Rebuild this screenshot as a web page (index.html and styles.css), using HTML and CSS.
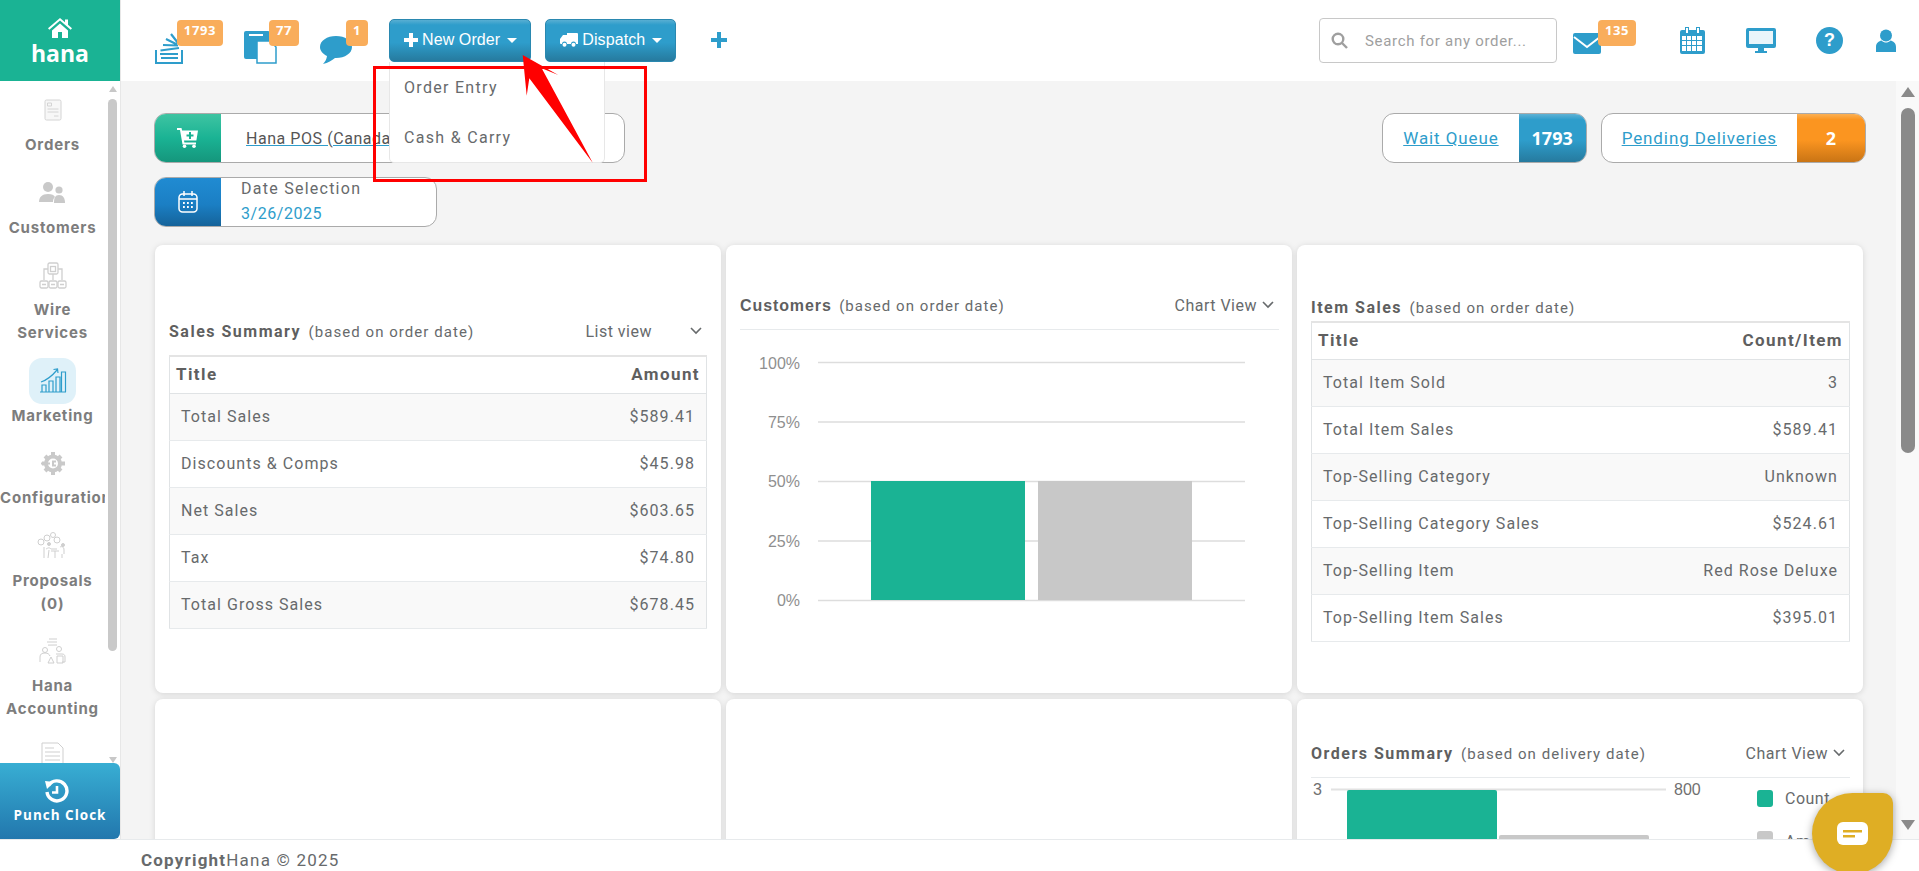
FILE: index.html
```html
<!DOCTYPE html>
<html lang="en">
<head>
	<meta charset="UTF-8">
	<meta name="viewport" content="width=device-width, initial-scale=1.0">
	<title>Hana POS</title>
	<link rel="stylesheet" href="styles.css">
</head>
<body>
<div class="app">
	<div class="shell">
		<!-- left menu -->
		<aside class="sidebar">
			<div class="logo">
				<svg class="logo-home" viewBox="0 0 24 20" width="24" height="20"><path fill="#fff" d="M12 0 0 10.2l1.3 1.5L12 2.6l10.7 9.1 1.3-1.5-4-3.4V1.5h-3v2.7zM4 12.6V20h6v-6h4v6h6v-7.4L12 5.6z"/></svg>
				<span class="logo-text">hana</span>
			</div>
			<div class="nav-wrap">
				<nav class="nav">
					<a class="nav-item">
						<span class="nav-icon"><svg width="18" height="22" viewBox="0 0 18 22" fill="none" stroke="#d4d4d4"><rect x="1" y="1" width="16" height="20" rx="1.5" fill="#f7f7f7"/><path d="M3.5 4h4v3h-4zM3.5 10h11M3.5 13h11M10 17h4.500"/></svg></span>
						<span class="nav-label">Orders</span>
					</a>
					<a class="nav-item">
						<span class="nav-icon"><svg width="27" height="21" viewBox="0 0 27 21" fill="#c9c9c9"><circle cx="9" cy="5" r="5"/><path d="M0 20c0-5 3-8 9-8 4 0 6 1 7 3-1.500 1-2 3-2 5z"/><circle cx="20" cy="8" r="3.600"/><path d="M15 21c0-5 1-8 5-8s6 3 6 8z"/></svg></span>
						<span class="nav-label">Customers</span>
					</a>
					<a class="nav-item">
						<span class="nav-icon"><svg width="28" height="27" viewBox="0 0 28 27" fill="none" stroke="#cfcfcf" stroke-width="1.300"><rect x="9" y="1" width="10" height="11" rx="1.500"/><rect x="11.500" y="4.500" width="5" height="5"/><path d="M9 7H5v11M19 7h4v11M14 12v6"/><rect x="1" y="19" width="8" height="7" rx="1.500"/><rect x="10" y="19" width="8" height="7" rx="1.500"/><rect x="19" y="19" width="8" height="7" rx="1.500"/><path d="M3 22.500h4M12 22.500h4M21 22.500h4"/></svg></span>
						<span class="nav-label">Wire<br>Services</span>
					</a>
					<a class="nav-item">
						<span class="nav-icon nav-icon-active"><svg width="28" height="25" viewBox="0 0 28 25" fill="none" stroke="#2e9dcb" stroke-width="1.200"><path d="M1 24h26M3 24v-7h4v7M10 24V13h4v11M17 24V9h4v15M22.500 24V4h4v20" /><path d="M2 14C8 12 13 8 18 2M14.500 1.500 18.500 1l.5 4" /></svg></span>
						<span class="nav-label">Marketing</span>
					</a>
					<a class="nav-item">
						<span class="nav-icon"><svg width="26" height="25" viewBox="0 0 26 25" fill="none" stroke="#c9c9c9"><circle cx="13" cy="12.500" r="7" stroke-width="4"/><path stroke-width="4" d="M13 1v3M13 21v3M2 12.500h3M21 12.500h4M5 5l2 2M19 18l2 2M21 5l-2 2M7 18l-2 2"/><path stroke-width="2" d="M1 12.500h9M16 10.500h-3v4h3"/></svg></span>
						<span class="nav-label nav-label-wide">Configuration</span>
					</a>
					<a class="nav-item">
						<span class="nav-icon"><svg width="32" height="27" viewBox="0 0 32 27" fill="none" stroke="#cfcfcf"><circle cx="4" cy="10" r="3"/><circle cx="10" cy="6" r="3"/><circle cx="16" cy="3" r="2.500"/><circle cx="20" cy="8" r="3"/><circle cx="12" cy="12" r="1.500" fill="#cfcfcf"/><circle cx="26" cy="13" r="1.500" fill="#cfcfcf"/><path d="M9 17c2-1 3-2 5 0h6M7 15v11M12 18l-1 8M23 15c2-1 4 0 4 3v4M25 22v4M14 19h8M18 19v7"/></svg></span>
						<span class="nav-label">Proposals<br>(0)</span>
					</a>
					<a class="nav-item">
						<span class="nav-icon"><svg width="27" height="28" viewBox="0 0 27 28" fill="none" stroke="#cfcfcf"><path d="M10 2h8M8 5h10M18 8l-9 .1"/><circle cx="6" cy="13" r="2.500"/><circle cx="20" cy="12" r="2.500"/><path d="M1 25v-5c0-3 2-4 5-4s4 1 5 3M17 17h6c2 0 3 1 3 3v5h-3M9 26l3-6 3 6zM18 19h6v7h-6z"/></svg></span>
						<span class="nav-label">Hana<br>Accounting</span>
					</a>
					<a class="nav-item">
						<span class="nav-icon"><svg width="23" height="29" viewBox="0 0 23 29" fill="none" stroke="#cfcfcf"><path d="M1 1h16l5 5v22H1zM4 6h9M4 10h15M4 14h15M4 18h15M4 22h6"/></svg></span>
					</a>
				</nav>
				<div class="side-scroll">
					<span class="arrow-up side-arrow"></span>
					<span class="side-thumb"></span>
					<span class="arrow-down side-arrow"></span>
				</div>
			</div>
			<a class="punch">
				<svg class="punch-icon" width="25" height="25" viewBox="0 0 25 25" fill="none" stroke="#fff" stroke-width="3.400"><path d="M4.500 6.500A10 10 0 1 1 3 13"/><path stroke-width="0" fill="#fff" d="M1 2l9 1-7 7z"/><path stroke-width="2.600" d="M13 7v6.500H8"/></svg>
				<span>Punch Clock</span>
			</a>
		</aside>

		<div class="right">
			<!-- top bar -->
			<header class="topbar">
				<a class="top-icon top-icon-stack">
					<svg width="28" height="33" viewBox="0 0 28 33" fill="none" stroke="#2e9dcb"><path stroke-width="2" d="M1 19v13h26V19"/><path stroke-width="2.200" d="M6 27h17M5 23h18M5.500 19.500 24 17M8 14l15 .5M11 8l11 5.500M16 3l7 9"/></svg>
					<span class="badge">1793</span>
				</a>
				<a class="top-icon top-icon-doc">
					<svg width="33" height="33" viewBox="0 0 33 33"><path fill="#2e9dcb" d="M2 0h22a2 2 0 0 1 2 2v26H2a2 2 0 0 1-2-2V2a2 2 0 0 1 2-2z"/><path fill="#fff" d="M5 3h14v2H5z"/><path fill="#fff" stroke="#2e9dcb" stroke-width="1.500" d="M13 10h13l6 6v16H13z"/></svg>
					<span class="badge">77</span>
				</a>
				<a class="top-icon top-icon-chat">
					<svg width="32" height="28" viewBox="0 0 32 28"><path fill="#2e9dcb" d="M16 0C7 0 0 4.700 0 11c0 4 3 7 7 9-.5 3-1.500 5.500-4 8 5-1 9-3.500 12-6h1c9 0 16-4.700 16-11S25 0 16 0z"/></svg>
					<span class="badge">1</span>
				</a>
				<div class="btn-wrap">
					<button class="btn"><svg width="14" height="14" viewBox="0 0 14 14"><path fill="#fff" d="M5 0h4v5h5v4H9v5H5V9H0V5h5z"/></svg> New Order <i class="caret"></i></button>
					<!-- open dropdown -->
					<div class="menu">
						<a>Order Entry</a>
						<a>Cash &amp; Carry</a>
					</div>
				</div>
				<button class="btn"><svg width="18" height="14" viewBox="0 0 18 14"><path fill="#fff" d="M7 0h10a1 1 0 0 1 1 1v10h-2a2.500 2.500 0 0 0-5 0H7a2.500 2.500 0 0 0-5 0H1a1 1 0 0 1-1-1V6l3-4h4z"/><circle fill="#fff" cx="4.500" cy="11.700" r="2"/><circle fill="#fff" cx="13.500" cy="11.700" r="2"/></svg> Dispatch <i class="caret"></i></button>
				<svg class="top-plus" width="16" height="16" viewBox="0 0 16 16"><path fill="#2e9dcb" d="M6 0h4v6h6v4h-6v6H6v-6H0V6h6z"/></svg>

				<div class="top-right">
					<label class="search">
						<svg width="17" height="17" viewBox="0 0 17 17" fill="none" stroke="#9f9f9f" stroke-width="2.400"><circle cx="7" cy="7" r="5.300"/><path d="m11 11 5 5"/></svg>
						<input type="text" placeholder="Search for any order...">
					</label>
					<a class="top-icon top-icon-mail">
						<svg width="28" height="21" viewBox="0 0 28 21"><path fill="#2e9dcb" d="M2 0h24a2 2 0 0 1 2 2v17a2 2 0 0 1-2 2H2a2 2 0 0 1-2-2V2a2 2 0 0 1 2-2z"/><path fill="none" stroke="#fff" stroke-width="2" d="m1 4 13 10L27 4"/></svg>
						<span class="badge">135</span>
					</a>
					<svg class="tool-cal" width="25" height="27" viewBox="0 0 25 27"><path fill="#2e9dcb" d="M2 3h3V0h4v3h7V0h4v3h3a2 2 0 0 1 2 2v20a2 2 0 0 1-2 2H2a2 2 0 0 1-2-2V5a2 2 0 0 1 2-2z"/><path fill="#fff" d="M6 1h2v5H6zM17 1h2v5h-2zM2 9h4v4H2zM7 9h4v4H7zM12 9h4v4h-4zM17 9h5v4h-5zM2 14h4v4H2zM7 14h4v4H7zM12 14h4v4h-4zM17 14h5v4h-5zM2 19h4v5H2zM7 19h4v5H7zM12 19h4v5h-4zM17 19h5v5h-5z"/></svg>
					<svg class="tool-monitor" width="30" height="25" viewBox="0 0 30 25"><path fill="#2e9dcb" d="M2 0h26a2 2 0 0 1 2 2v16a2 2 0 0 1-2 2H18v3h3v2H9v-2h3v-3H2a2 2 0 0 1-2-2V2a2 2 0 0 1 2-2z"/><path fill="#fff" d="M3 3h24v13H3z" opacity=".9"/></svg>
					<span class="tool-help">?</span>
					<svg class="tool-user" width="20" height="23" viewBox="0 0 20 23"><circle fill="#2e9dcb" cx="10" cy="6.500" r="6"/><path fill="#2e9dcb" d="M0 23v-5c0-4 3-6 5.500-6.500C7 13 8.500 13.500 10 13.500s3-.5 4.500-2C17 12 20 14 20 18v5z"/></svg>
				</div>
			</header>

			<div class="main-row">
				<main class="content">
					<div class="pill-row">
						<div class="pill pill-store">
							<span class="pill-icon pill-icon-green">
								<svg width="22" height="20" viewBox="0 0 22 20"><path fill="#fff" d="M0 0h4.500l.6 2.500H21l-1.600 10H7l.4 2H19v2H5.500L3 2H0z"/><circle fill="#fff" cx="7.500" cy="18.200" r="1.800"/><circle fill="#fff" cx="17" cy="18.200" r="1.800"/><path fill="#1ab394" d="M12 4h2v2.500h2.500v2H14V11h-2V8.500H9.500v-2H12z"/></svg>
							</span>
							<a class="pill-link pill-link-dark">Hana POS (Canada)</a>
						</div>
						<div class="pill-group">
							<div class="pill">
								<a class="pill-link">Wait Queue</a>
								<span class="pill-count pill-count-blue">1793</span>
							</div>
							<div class="pill">
								<a class="pill-link">Pending Deliveries</a>
								<span class="pill-count pill-count-orange">2</span>
							</div>
						</div>
					</div>
					<div class="pill pill-date">
						<span class="pill-icon pill-icon-blue">
							<svg width="20" height="22" viewBox="0 0 20 22" fill="none" stroke="#fff" stroke-width="1.500"><rect x="1" y="3" width="18" height="18" rx="3.500"/><path d="M1 8h18M6 0v5M14 0v5"/><path stroke-width="1.800" stroke-dasharray="1.800 2.200" d="M5 12h11M5 16h11"/></svg>
						</span>
						<div class="date-text">
							<span class="date-label">Date Selection</span>
							<span class="date-value">3/26/2025</span>
						</div>
					</div>

					<div class="cards">
						<section class="card card-sales">
							<div class="card-head">
								<span class="card-title"><b>Sales Summary</b> <small>(based on order date)</small></span>
								<span class="view-select view-select-list">List view <svg class="chev" width="12" height="8" viewBox="0 0 12 8"><path fill="none" stroke="#676a6c" stroke-width="1.600" d="m1 1 5 5 5-5"/></svg></span>
							</div>
							<table class="data">
								<tr><th>Title</th><th>Amount</th></tr>
								<tr><td>Total Sales</td><td>$589.41</td></tr>
								<tr><td>Discounts &amp; Comps</td><td>$45.98</td></tr>
								<tr><td>Net Sales</td><td>$603.65</td></tr>
								<tr><td>Tax</td><td>$74.80</td></tr>
								<tr><td>Total Gross Sales</td><td>$678.45</td></tr>
							</table>
						</section>

						<section class="card card-customers">
							<div class="card-head card-head-line">
								<span class="card-title card-title-arial"><b>Customers</b> <small>(based on order date)</small></span>
								<span class="view-select">Chart View <svg class="chev" width="12" height="8" viewBox="0 0 12 8"><path fill="none" stroke="#676a6c" stroke-width="1.600" d="m1 1 5 5 5-5"/></svg></span>
							</div>
							<svg class="chart" width="539" height="300" viewBox="740 330 539 300">
								<g stroke="#ddd" stroke-width="1.500">
									<path d="M818 362.500h427M818 422h427M818 481.500h427M818 541h427M818 600.500h427"/>
								</g>
								<rect x="871" y="481" width="154" height="119" fill="#1ab394"/>
								<rect x="1038" y="481" width="154" height="119" fill="#c8c8c8"/>
								<g class="chart-label" text-anchor="end">
									<text x="800" y="369">100%</text>
									<text x="800" y="428">75%</text>
									<text x="800" y="487">50%</text>
									<text x="800" y="547">25%</text>
									<text x="800" y="606">0%</text>
								</g>
							</svg>
						</section>

						<section class="card card-items">
							<div class="card-head">
								<span class="card-title"><b>Item Sales</b> <small>(based on order date)</small></span>
							</div>
							<table class="data">
								<tr><th>Title</th><th>Count/Item</th></tr>
								<tr><td>Total Item Sold</td><td>3</td></tr>
								<tr><td>Total Item Sales</td><td>$589.41</td></tr>
								<tr><td>Top-Selling Category</td><td>Unknown</td></tr>
								<tr><td>Top-Selling Category Sales</td><td>$524.61</td></tr>
								<tr><td>Top-Selling Item</td><td>Red Rose Deluxe</td></tr>
								<tr><td>Top-Selling Item Sales</td><td>$395.01</td></tr>
							</table>
						</section>

						<section class="card"></section>
						<section class="card"></section>

						<section class="card card-orders">
							<div class="card-head card-head-line">
								<span class="card-title"><b>Orders Summary</b> <small>(based on delivery date)</small></span>
								<span class="view-select">Chart View <svg class="chev" width="12" height="8" viewBox="0 0 12 8"><path fill="none" stroke="#676a6c" stroke-width="1.600" d="m1 1 5 5 5-5"/></svg></span>
							</div>
							<svg class="chart" width="539" height="100" viewBox="1311 777 539 100">
								<path d="M1331 788.500h335" stroke="#e2e2e2" stroke-width="2"/>
								<path d="M1347 791a2 2 0 0 1 2-2h146a2 2 0 0 1 2 2v90h-150z" fill="#1ab394"/>
								<path d="M1499 836a2 2 0 0 1 2-2h146a2 2 0 0 1 2 2v50h-150z" fill="#c8c8c8"/>
								<g class="chart-label chart-label-dark">
									<text x="1313" y="794">3</text>
									<text x="1674" y="794">800</text>
								</g>
							</svg>
							<div class="legend">
								<span class="legend-row"><i class="swatch swatch-green"></i>Count</span>
								<span class="legend-row"><i class="swatch swatch-gray"></i>Amount</span>
							</div>
						</section>
					</div>
				</main>
				<div class="page-scroll">
					<span class="arrow-up page-arrow"></span>
					<span class="page-thumb"></span>
					<span class="arrow-down page-arrow"></span>
				</div>
			</div>
		</div>
	</div>

	<footer class="footer"><b>Copyright</b>Hana © 2025</footer>
</div>

<!-- red callout drawn over the screenshot -->
<svg class="callout" width="1919" height="871" viewBox="0 0 1919 871">
	<rect x="374.500" y="67.500" width="271" height="113" fill="none" stroke="#f00" stroke-width="3"/>
	<path fill="#f00" d="M522.700 55 558.300 75 541.700 68.300 592.700 162.700 529.300 78.300 526.700 95.700z"/>
</svg>

<a class="chat-widget">
	<svg width="31" height="23" viewBox="0 0 31 23"><rect width="31" height="23" rx="6" fill="#fff"/><path fill="#dfae24" d="M6 8h19v2.400H6zM6 13h12v2.400H6z"/></svg>
</a>
</body>
</html>
```

FILE: styles.css
```css
html, body {
	margin: 0;
	height: 100%;
	overflow: hidden;
}
body {
	font-family: Roboto, "Liberation Sans", sans-serif;
	color: #676a6c;
	background-color: #fff;
}
.app {
	display: flex;
	flex-direction: column;
	height: 100vh;
}
.shell {
	display: flex;
	flex: 1;
	min-height: 0;
}

/* sidebar */
.sidebar {
	display: flex;
	flex-direction: column;
	width: 120px;
	flex-shrink: 0;
	border-right: 1px solid #e7e7e7;
	box-sizing: content-box;
}
.logo {
	display: flex;
	flex-direction: column;
	align-items: center;
	height: 81px;
	padding-top: 18px;
	box-sizing: border-box;
	background-color: #1ab394;
	color: #fff;
}
.logo-text {
	font-family: "Open Sans", sans-serif;
	font-weight: 700;
	font-size: 23px;
	line-height: 30px;
}
.nav-wrap {
	display: flex;
	flex: 1;
	min-height: 0;
}
.nav {
	display: flex;
	flex-direction: column;
	gap: 13.5px;
	width: 105px;
	padding-top: 6px;
	overflow: hidden;
}
.nav-item {
	display: flex;
	flex-direction: column;
	align-items: center;
	flex-shrink: 0;
}
.nav-icon {
	display: flex;
	align-items: center;
	justify-content: center;
	width: 47px;
	height: 46px;
	border-radius: 13px;
}
.nav-icon-active {
	background-color: #dff1f9;
}
.nav-label {
	font-family: Inter, sans-serif;
	font-weight: 700;
	font-size: 15px;
	line-height: 23px;
	letter-spacing: .8px;
	text-align: center;
	color: #7d7d7d;
	white-space: nowrap;
}
.nav-label-wide {
	width: 105px;
	text-align: left;
}
.side-scroll {
	display: flex;
	flex-direction: column;
	align-items: center;
	width: 9px;
	margin-left: 3px;
	padding-top: 5px;
}
.side-arrow {
	border-left: 4.5px solid transparent;
	border-right: 4.5px solid transparent;
}
.arrow-up.side-arrow {
	border-bottom: 6px solid #c8c8c8;
}
.arrow-down.side-arrow {
	border-top: 6px solid #c8c8c8;
	margin-top: 106px;
}
.side-thumb {
	width: 9px;
	height: 554px;
	margin-top: 7px;
	border-radius: 5px;
	background-color: #c9c9c9;
}
.punch {
	display: flex;
	flex-direction: column;
	align-items: center;
	justify-content: center;
	gap: 2px;
	height: 76px;
	flex-shrink: 0;
	border-radius: 0 6px 6px 0;
	background: linear-gradient(#38aed3, #2277ad);
	color: #fff;
	font-family: "Open Sans", sans-serif;
	font-weight: 700;
	font-size: 13.5px;
	letter-spacing: 1px;
	position: relative;
	z-index: 2;
}
.punch-icon {
	margin-left: -7px;
}

/* top bar */
.right {
	display: flex;
	flex-direction: column;
	flex: 1;
	min-width: 0;
}
.topbar {
	display: flex;
	align-items: center;
	gap: 21px;
	height: 81px;
	flex-shrink: 0;
	padding: 0 23px 0 34px;
	box-sizing: border-box;
	position: relative;
	z-index: 5;
}
.top-icon {
	display: block;
	position: relative;
	height: 45px;
	margin-top: 3px;
}
.top-icon svg {
	position: absolute;
	bottom: 1px;
	left: 0;
}
.top-icon-stack { width: 68px; }
.top-icon-doc { width: 55px; }
.top-icon-chat { width: 48px; }
.top-icon-mail { width: 63px; }
.top-icon-mail svg { bottom: 11px; }
.badge {
	position: absolute;
	top: 0;
	right: 0;
	height: 26px;
	padding: 3px 7px 0;
	box-sizing: border-box;
	border-radius: 4px;
	background-color: #f9ad5b;
	color: #fff;
	font-family: "Open Sans", sans-serif;
	font-weight: 700;
	font-size: 13px;
	line-height: 15px;
	letter-spacing: .6px;
}
.btn-wrap {
	position: relative;
}
.btn {
	display: flex;
	align-items: center;
	gap: 4px;
	height: 43px;
	padding: 0 13px 2px 14px;
	border: 1px solid #2a88b0;
	border-radius: 5px;
	background: linear-gradient(#58aed2, #2e9dcb 12%, #2e9dcb 55%, #267a9e);
	color: #fff;
	font-family: "Liberation Sans", Arial, sans-serif;
	font-size: 16px;
	letter-spacing: .1px;
}
.btn-wrap + .btn {
	margin-left: -7px;
}
.caret {
	width: 0;
	height: 0;
	margin-left: 3px;
	margin-top: 2px;
	border-left: 5px solid transparent;
	border-right: 5px solid transparent;
	border-top: 5px solid #fff;
}
.menu {
	position: absolute;
	top: 43px;
	left: 0;
	width: 216px;
	height: 101px;
	box-sizing: border-box;
	background-color: #fff;
	border: 1px solid #e7e7e7;
	border-top: none;
	border-radius: 0 0 5px 5px;
	font-size: 16px;
	letter-spacing: 1.3px;
}
.menu a {
	display: block;
	height: 50px;
	padding: 14px 0 0 14px;
	box-sizing: border-box;
	line-height: 24px;
}
.top-plus {
	margin-left: 14px;
	margin-top: -2px;
}
.top-right {
	display: flex;
	align-items: center;
	margin-left: auto;
}
.search {
	display: flex;
	align-items: center;
	gap: 17px;
	width: 238px;
	height: 45px;
	padding-left: 11px;
	margin-right: 16px;
	box-sizing: border-box;
	border: 1px solid #c8c8c8;
	border-radius: 4px;
}
.search input {
	width: 190px;
	padding: 0;
	border: none;
	outline: none;
	background: none;
	font-family: Roboto, sans-serif;
	font-size: 15px;
	letter-spacing: .7px;
}
.search input::placeholder {
	color: #9f9f9f;
	opacity: 1;
}
.tool-cal { margin-left: 44px; }
.tool-monitor { margin-left: 41px; }
.tool-help {
	width: 27px;
	height: 27px;
	margin-left: 40px;
	border-radius: 50%;
	background-color: #2e9dcb;
	color: #fff;
	font-family: "Liberation Sans", sans-serif;
	font-weight: 700;
	font-size: 18px;
	line-height: 27px;
	text-align: center;
}
.tool-user { margin-left: 33px; }

/* page area */
.main-row {
	display: flex;
	flex: 1;
	min-height: 0;
}
.content {
	flex: 1;
	min-width: 0;
	padding: 32px 30px 0 33px;
	background-color: #f4f4f4;
	overflow: hidden;
}
.page-scroll {
	display: flex;
	flex-direction: column;
	align-items: center;
	width: 23px;
	padding-top: 6px;
	box-sizing: border-box;
	background-color: #f9f9f9;
}
.page-arrow {
	border-left: 7px solid transparent;
	border-right: 7px solid transparent;
}
.arrow-up.page-arrow {
	border-bottom: 10px solid #8a8a8a;
}
.page-thumb {
	width: 14px;
	height: 345px;
	margin-top: 11px;
	border-radius: 7px;
	background-color: #8a8a8a;
}
.arrow-down.page-arrow {
	margin-top: 367px;
	border-top: 10px solid #8a8a8a;
}

/* pills */
.pill-row {
	display: flex;
	justify-content: space-between;
}
.pill-group {
	display: flex;
	gap: 14px;
}
.pill {
	display: flex;
	align-items: stretch;
	height: 50px;
	box-sizing: border-box;
	border: 1px solid #aaa;
	border-radius: 12px;
	background-color: #fff;
	overflow: hidden;
}
.pill-store {
	width: 471px;
}
.pill-date {
	width: 283px;
	margin-top: 14px;
}
.pill-icon {
	display: flex;
	align-items: center;
	justify-content: center;
	width: 66px;
	flex-shrink: 0;
}
.pill-icon-green {
	background: linear-gradient(#3ec4a2, #1ab394 50%, #15967c);
}
.pill-icon-blue {
	background: linear-gradient(#208bd2, #1b7fc4 55%, #15639a);
}
.pill-link {
	align-self: center;
	padding: 0 20px;
	font-size: 17px;
	letter-spacing: .9px;
	text-decoration: underline;
	color: #2e9dcb;
	white-space: nowrap;
}
.pill-link-dark {
	padding-left: 25px;
	font-size: 16px;
	letter-spacing: .55px;
	color: #555;
	text-decoration-color: #2e9dcb;
}
.pill-count {
	display: flex;
	align-items: center;
	justify-content: center;
	color: #fff;
	font-family: "Open Sans", sans-serif;
	font-weight: 700;
	font-size: 18px;
}
.pill-count-blue {
	width: 67px;
	background: linear-gradient(#5fb2d5, #2e9dcb 12%, #2e9dcb 55%, #267a9e);
}
.pill-count-orange {
	width: 68px;
	background: linear-gradient(#fbb054, #fb9520 12%, #fb9520 55%, #c97415);
}
.date-text {
	display: flex;
	flex-direction: column;
	margin-top: -2px;
	padding-left: 20px;
	font-size: 16px;
	line-height: 25px;
	letter-spacing: .55px;
}
.date-label {
	letter-spacing: 1.25px;
}
.date-value {
	color: #2e9dcb;
}

/* cards */
.cards {
	display: grid;
	grid-template-columns: repeat(3, 566px);
	grid-template-rows: 448px 400px;
	gap: 6px 5px;
	margin: 18px 0 0 1px;
}
.card {
	position: relative;
	padding: 0 13px 0 14px;
	border-radius: 8px;
	background-color: #fff;
	box-shadow: 0 1px 6px rgba(0, 0, 0, .13);
	overflow: hidden;
}
.card-head {
	display: flex;
	align-items: center;
	justify-content: space-between;
	height: 24px;
}
.card-head-line {
	height: 37px;
	padding: 0 5px 12px 0;
	box-sizing: border-box;
	border-bottom: 1px solid #e7eaec;
}
.card-sales { padding: 74px 14px 0; }
.card-sales .card-head { margin-bottom: 12px; padding-right: 5px; }
.card-customers { padding-top: 48px; }
.card-items { padding-top: 50px; }
.card-items .card-head { margin-bottom: 2px; }
.card-orders { padding-top: 42px; }
.card-title {
	white-space: nowrap;
	font-size: 16px;
	letter-spacing: 1.5px;
}
.card-title b {
	color: #5f5f5f;
}
.card-title small {
	margin-left: 2px;
	font-size: 15px;
	letter-spacing: 1.05px;
}
.card-title-arial b {
	font-family: "Liberation Sans", sans-serif;
	letter-spacing: .9px;
}
.view-select {
	display: flex;
	align-items: center;
	gap: 5px;
	font-family: Roboto, sans-serif;
	font-size: 16px;
	letter-spacing: .5px;
	white-space: nowrap;
}
.view-select-list {
	gap: 38px;
}
.chart {
	display: block;
}
.chart-label {
	font-family: "Liberation Sans", sans-serif;
	font-size: 16px;
	fill: #8f8f8f;
}
.chart-label-dark {
	fill: #707070;
}
.legend {
	position: absolute;
	left: 460px;
	top: 91px;
	display: flex;
	flex-direction: column;
	gap: 26px;
	font-size: 16px;
	letter-spacing: .5px;
}
.legend-row {
	display: flex;
	align-items: center;
	gap: 12px;
	height: 17px;
}
.swatch {
	width: 16px;
	height: 17px;
	border-radius: 3px;
}
.swatch-green { background-color: #1ab394; }
.swatch-gray {
	margin-bottom: 4px;
	background-color: #c8c8c8;
}

/* tables */
.data {
	width: 100%;
	border-collapse: collapse;
	border-top: 2px solid #e4e4e4;
	font-size: 16px;
	letter-spacing: 1.05px;
}
.data th {
	height: 37px;
	padding: 0 6px 2px;
	box-sizing: border-box;
	border: 1px solid #e0e3e5;
	border-width: 0 0 1px;
	text-align: left;
	font-size: 17px;
	letter-spacing: 1.4px;
	font-weight: 700;
	color: #5f5f5f;
}
.data td {
	height: 47px;
	padding: 0 11px;
	box-sizing: border-box;
	border-top: 1px solid #e7eaec;
	border-bottom: 1px solid #e7eaec;
}
.data tr > :first-child {
	border-left: 1px solid #e0e3e5;
}
.data tr > :last-child {
	border-right: 1px solid #e0e3e5;
	text-align: right;
}
.data tr:nth-child(even) td {
	background-color: #f9f9f9;
}

/* footer */
.footer {
	height: 32px;
	flex-shrink: 0;
	padding-left: 141px;
	box-sizing: border-box;
	border-top: 1px solid #e7eaec;
	background-color: #fff;
	position: relative;
	z-index: 3;
	font-size: 17px;
	line-height: 40px;
	letter-spacing: 1.2px;
	overflow: hidden;
}

/* overlays */
.callout {
	position: absolute;
	top: 0;
	left: 0;
	z-index: 10;
	pointer-events: none;
}
.chat-widget {
	position: absolute;
	left: 1812px;
	top: 793px;
	z-index: 11;
	display: flex;
	align-items: center;
	justify-content: center;
	width: 81px;
	height: 81px;
	border-radius: 50% 10px 50% 50%;
	background-color: #dfae24;
	box-shadow: 0 2px 8px rgba(0, 0, 0, .35);
}
```
